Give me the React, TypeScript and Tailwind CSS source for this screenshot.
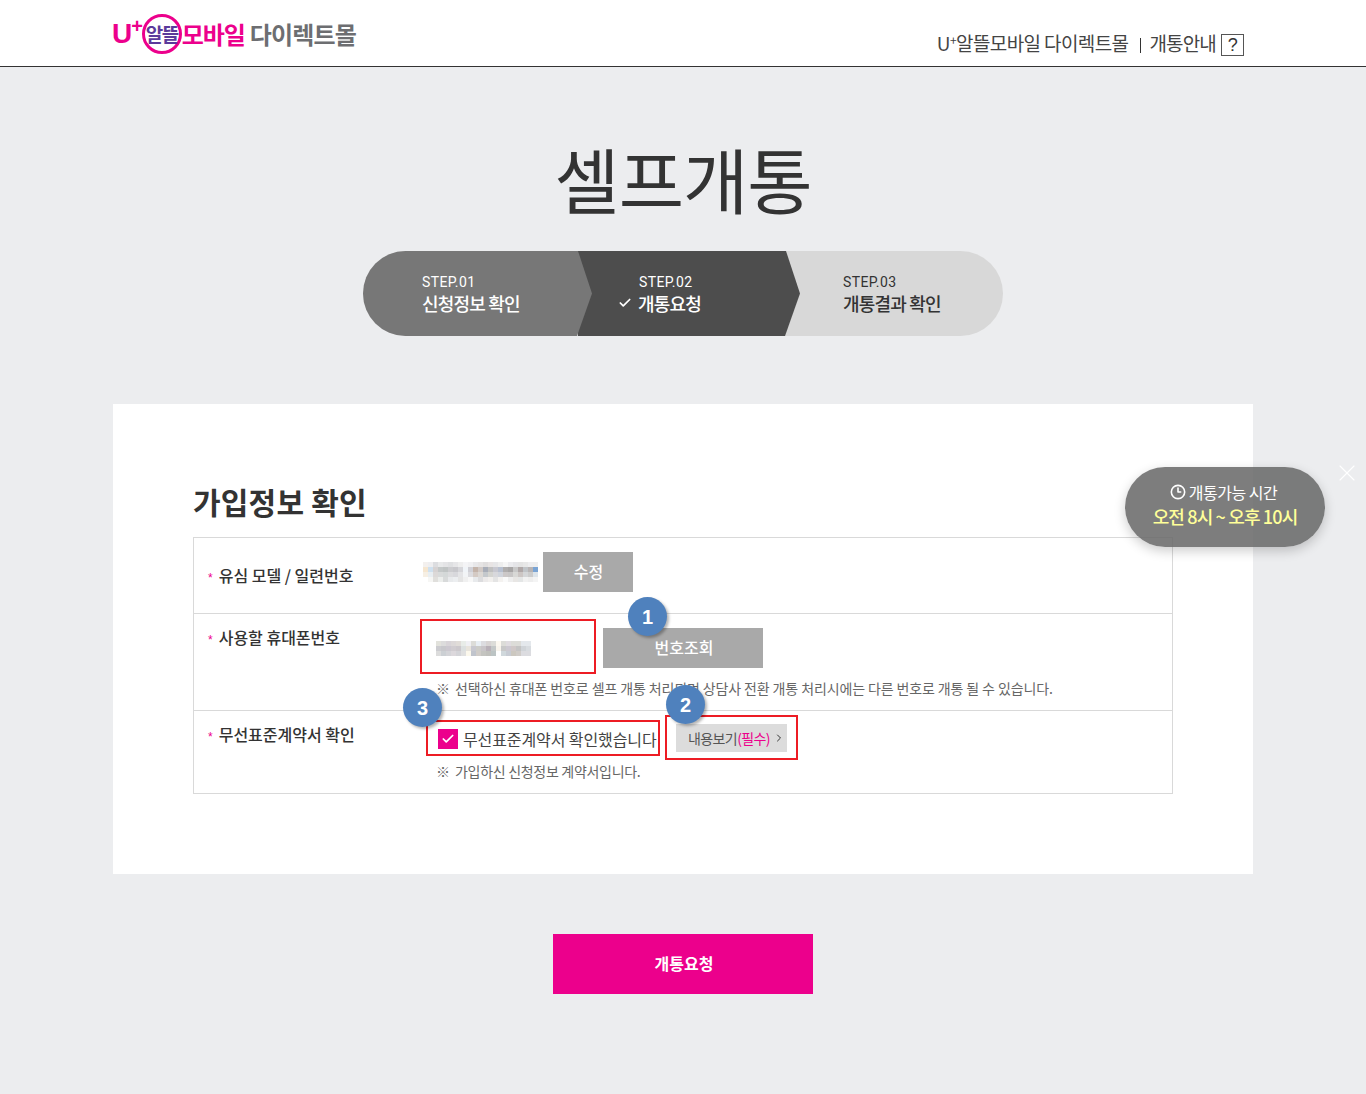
// src/App.tsx
import React from 'react'
import { Check, ChevronRight, Clock3, X } from 'lucide-react'

const font = "font-['Noto_Sans_CJK_KR','Noto_Sans',sans-serif]"

const mosaicA = [
  ['#f3f0ee', '#eeeef0', '#dcdde0', '#e8e9ea', '#e4e4e6', '#dfe0e2', '#e6e6e8', '#eeeeee', '#f4f4f6', '#f0f0f2', '#e8e8ea', '#e6e4e4', '#e0dede', '#e8e4e4', '#e6e6e8', '#eeeeee', '#f6f6f6', '#ebebee', '#e5e5e8', '#e4e4e4', '#e8e8e8', '#eeeef0', '#eeeeee'],
  ['#f5e6d0', '#cfe0ee', '#d6d2d2', '#c4c8c8', '#c0c4c4', '#cccccf', '#c8c8cc', '#d6d6da', '#f0f4f8', '#d0d0d6', '#c4b4aa', '#d0c8c4', '#a8adb8', '#c0c0c0', '#c8c8d0', '#b8c0d0', '#b0aeae', '#a8a6a6', '#c8c8c8', '#b0a8a8', '#c0c4c8', '#b8b4b4', '#7aa4d4'],
  ['#f6efe4', '#e8eef2', '#dcd9d8', '#d8dada', '#d4d8d8', '#dcdcde', '#d8d8dc', '#e4e4e6', '#f2f4f6', '#dcdce0', '#d4cac4', '#dcd8d4', '#c4c8cc', '#d4d4d0', '#d8d8dc', '#d0d4dc', '#ccc8c8', '#c8c6c6', '#d8d8d6', '#ccc6c4', '#d4d6d8', '#cccccc', '#dde4ea'],
  ['#ffffff', '#f6f6f4', '#e0dfdc', '#eceeec', '#d8dada', '#e8eaec', '#eceef0', '#e4e4e4', '#f0f0f0', '#f8f8f8', '#e8eaec', '#dcdcde', '#eceaea', '#f2f0ee', '#e4e4e4', '#f4f2f0', '#fafafa', '#eeeeee', '#e8e6e4', '#e4e6e6', '#f2f2f2', '#eeeeee', '#f4f4f4'],
]

const mosaicB = [
  ['#e2e2dc', '#dcdcdc', '#d8d4d8', '#dcd8d8', '#e0dcd8', '#e8ece8', '#f0f0f4', '#dcdcd8', '#e8eef4', '#dcdce0', '#d8d4d4', '#dcdcd8', '#fcf8f0', '#dcdcd8', '#e0dce0', '#dcdcd8', '#dcdcd8', '#e4e8ec', '#e4e8ec'],
  ['#ccccd0', '#c8c8cc', '#ccc8d0', '#d0ccd0', '#ccc8cc', '#dce0e0', '#e8e4dc', '#c8c8d0', '#ccccc8', '#c8c4c8', '#b8b0b8', '#c4c8c8', '#f8f4ec', '#c8c8c8', '#ccc8d0', '#d0c8c8', '#c4c4c4', '#d0d4d8', '#d8dce0'],
  ['#dcdcdc', '#ccd0d4', '#d4d4d8', '#dcd8dc', '#d4d4d8', '#e0e0e0', '#fcf8ec', '#c0c4cc', '#d0ccc8', '#c4c4c0', '#c0c0bc', '#bcc4c4', '#ffffff', '#d0d8dc', '#c8ccd4', '#ccc8c0', '#d0ccc8', '#dcdce0', '#dcdce0'],
]

const Mosaic = ({ rows }: { rows: string[][] }) => (
  <div className="flex flex-col">
    {rows.map((row, i) => (
      <div key={i} className="flex">
        {row.map((c, j) => (
          <span key={j} className="h-[5px] w-[5px]" style={{ background: c }} />
        ))}
      </div>
    ))}
  </div>
)

const Badge = ({ n, className }: { n: number; className: string }) => (
  <span
    className={`absolute flex h-[39px] w-[39px] items-center justify-center rounded-full bg-[#4f81bd] text-[20px] font-bold text-white shadow-[2px_2px_3px_rgba(0,0,0,0.3)] font-['Liberation_Sans',sans-serif] ${className}`}
  >
    {n}
  </span>
)

const Star = () => (
  <span className="mr-[6px] font-['Liberation_Sans',sans-serif] text-[12px] text-[#ec008c]">*</span>
)

const App = (): React.ReactElement => {
  return (
    <div className={`relative min-h-[1094px] w-full overflow-hidden bg-[#ecedef] ${font}`}>
      <header className="h-[67px] border-b border-[#333] bg-white">
        <div className="mx-auto flex h-full w-[1140px] justify-between">
          <div className="-ml-[1px] flex h-full items-center pt-[2px] text-[24px] font-bold tracking-[-1.1px]">
            <span className="font-['Liberation_Sans',sans-serif] text-[28px] text-[#ec008c]">
              U<sup className="top-[-10px] text-[20px]">+</sup>
            </span>
            <span className="flex h-[40px] w-[40px] items-center justify-center rounded-full border-[3px] border-[#ec008c] text-[19px] tracking-[-1.5px] whitespace-nowrap text-[#5b3a9b]">
              알뜰
            </span>
            <span className="text-[#ec008c]">모바일</span>
            <span className="ml-[5px] tracking-[-0.8px] text-[#6d6e71]">다이렉트몰</span>
          </div>
          <div className="mr-[9px] flex items-end pb-[11px] text-[19px] leading-[24px] tracking-[-0.6px] text-[#444]">
            <span>
              U<sup className="text-[12px]">+</sup>알뜰모바일 다이렉트몰
            </span>
            <span className="mr-[8px] mb-[2px] ml-[12px] h-[15px] w-px bg-[#333]" />
            <span className="tracking-[-0.85px]">개통안내</span>
            <span className="-mb-[1px] ml-[5px] flex h-[22px] w-[23px] items-center justify-center border border-[#555] text-[18px] font-['Liberation_Sans',sans-serif] text-[#333]">
              ?
            </span>
          </div>
        </div>
      </header>

      <h1 className="mt-[64px] h-[120px] text-center text-[71px] leading-[92px] font-normal tracking-[-1px] text-[#333]">
        셀프개통
      </h1>

      <div className="mx-auto flex h-[85px] w-[640px] overflow-hidden rounded-full bg-[#d8d8d8]">
        <div className="relative z-20 flex w-[229px] shrink-0 flex-col justify-center bg-[#777] pt-[2px] pl-[59px] text-white [clip-path:polygon(0_0,215px_0,229px_50%,214px_100%,0_100%)]">
          <span className="font-['Roboto',sans-serif] text-[14px] leading-[16px] tracking-[0.4px]">STEP.01</span>
          <span className="text-[18px] leading-[26px] font-medium tracking-[-0.8px]">신청정보 확인</span>
        </div>
        <div className="relative z-10 -ml-[14px] flex w-[222px] shrink-0 flex-col justify-center bg-[#4d4d4d] pt-[2px] pl-[61px] text-white [clip-path:polygon(0_0,208px_0,222px_50%,207px_100%,0_100%)]">
          <span className="font-['Roboto',sans-serif] text-[14px] leading-[16px] tracking-[0.4px]">STEP.02</span>
          <span className="relative -ml-[1px] text-[18px] leading-[26px] font-medium tracking-[-0.8px]">
            <Check className="absolute top-[6px] -left-[20px]" size={14} strokeWidth={3} />
            개통요청
          </span>
        </div>
        <div className="-ml-[14px] flex flex-1 flex-col justify-center pt-[2px] pl-[57px] text-[#333]">
          <span className="font-['Roboto',sans-serif] text-[14px] leading-[16px] tracking-[0.4px]">STEP.03</span>
          <span className="text-[18px] leading-[26px] font-medium tracking-[-0.8px]">개통결과 확인</span>
        </div>
      </div>

      <main className="mx-auto mt-[68px] h-[470px] w-[1140px] bg-white px-[80px] pt-[76px]">
        <h2 className="h-[57px] text-[30px] leading-[42px] font-bold tracking-[0.2px] text-[#333]">가입정보 확인</h2>
        <div className="w-[980px] border border-[#d9d9d9] text-[#333]">
          <div className="flex h-[76px] border-b border-[#d9d9d9]">
            <div className="w-[230px] pt-[23px] pl-[14px] text-[16px] leading-[28px] font-medium">
              <Star />
              유심 모델 / 일련번호
            </div>
            <div className="flex items-start pt-[14px]">
              <div className="mt-[10px] -ml-[1px] w-[120px]">
                <Mosaic rows={mosaicA} />
              </div>
              <button className="h-[40px] w-[90px] bg-[#a9a9a9] pb-[2px] pl-[1px] text-[16px] font-medium text-white">수정</button>
            </div>
          </div>

          <div className="h-[97px] border-b border-[#d9d9d9]">
            <div className="flex">
              <div className="w-[230px] pt-[9px] pl-[14px] text-[16px] leading-[28px] font-medium">
                <Star />
                사용할 휴대폰번호
              </div>
              <div className="mt-[14px] flex">
                <div className="flex h-[40px] w-[179px] items-center pl-[12px]">
                  <Mosaic rows={mosaicB} />
                </div>
                <button className="h-[40px] w-[160px] bg-[#a9a9a9] pb-[2px] pl-[2px] text-[16px] font-medium text-white">번호조회</button>
              </div>
            </div>
            <p className="mt-[10px] ml-[243px] flex text-[14px] leading-[20px] tracking-[-0.12px] whitespace-nowrap text-[#666]">
              <span className="-ml-px w-[19px] shrink-0">※</span>
              선택하신 휴대폰 번호로 셀프 개통 처리되며 상담사 전환 개통 처리시에는 다른 번호로 개통 될 수 있습니다.
            </p>
          </div>

          <div className="h-[82px]">
            <div className="flex">
              <div className="w-[230px] pt-[9px] pl-[14px] text-[16px] leading-[28px] font-medium">
                <Star />
                무선표준계약서 확인
              </div>
              <div className="mt-[15px] ml-[14px] flex items-center">
                <span className="flex h-[20px] w-[20px] items-center justify-center bg-[#ec008c] text-white">
                  <Check size={14} strokeWidth={3} />
                </span>
                <span className="ml-[5px] w-[213px] text-[16px] leading-[20px] tracking-[-0.1px] whitespace-nowrap text-[#444]">
                  무선표준계약서 확인했습니다
                </span>
                <span className="-mt-[2px] flex h-[28px] w-[111px] items-center bg-[#dcdcdc] pl-[12px] text-[14px] tracking-[-0.6px] whitespace-nowrap text-[#555]">
                  내용보기<span className="text-[#ec008c]">(필수)</span>
                  <ChevronRight className="ml-[3px] text-[#333]" size={12} />
                </span>
              </div>
            </div>
            <p className="mt-[9px] ml-[243px] flex text-[14px] leading-[20px] tracking-[-0.3px] whitespace-nowrap text-[#666]">
              <span className="-ml-px w-[19px] shrink-0">※</span>
              가입하신 신청정보 계약서입니다.
            </p>
          </div>
        </div>
      </main>

      <div className="mt-[60px] flex justify-center pb-[100px]">
        <button className="h-[60px] w-[260px] bg-[#ec008c] pb-[2px] pl-[2px] text-[16px] font-bold text-white">개통요청</button>
      </div>

      {/* 안내 표시: 빨간 박스와 번호 */}
      <span className="absolute top-[619px] left-[420px] h-[55px] w-[176px] border-2 border-[#ed1c24]" />
      <span className="absolute top-[720px] left-[426px] h-[36px] w-[234px] border-2 border-[#ed1c24]" />
      <span className="absolute top-[715px] left-[665px] h-[45px] w-[133px] border-2 border-[#ed1c24]" />
      <Badge n={1} className="top-[597px] left-[628px]" />
      <Badge n={2} className="top-[685px] left-[666px]" />
      <Badge n={3} className="top-[688px] left-[403px]" />

      {/* 개통가능 시간 팝업 */}
      <div className="absolute top-[467px] left-[1125px] flex h-[80px] w-[200px] flex-col items-center justify-center rounded-[40px] bg-[#666]/85 pb-[6px] shadow-[0_4px_12px_rgba(0,0,0,0.2)]">
        <span className="-ml-[3px] flex items-center gap-[3px] text-[16px] leading-[24px] tracking-[-0.5px] text-white">
          <Clock3 size={16} strokeWidth={2.4} />
          개통가능 시간
        </span>
        <span className="text-[18px] leading-[25px] font-medium tracking-[-0.85px] text-[#ffff99]">오전 8시 ~ 오후 10시</span>
      </div>
      <X className="absolute top-[459px] left-[1333px] text-white" size={28} strokeWidth={1} />
    </div>
  )
}

export default App
